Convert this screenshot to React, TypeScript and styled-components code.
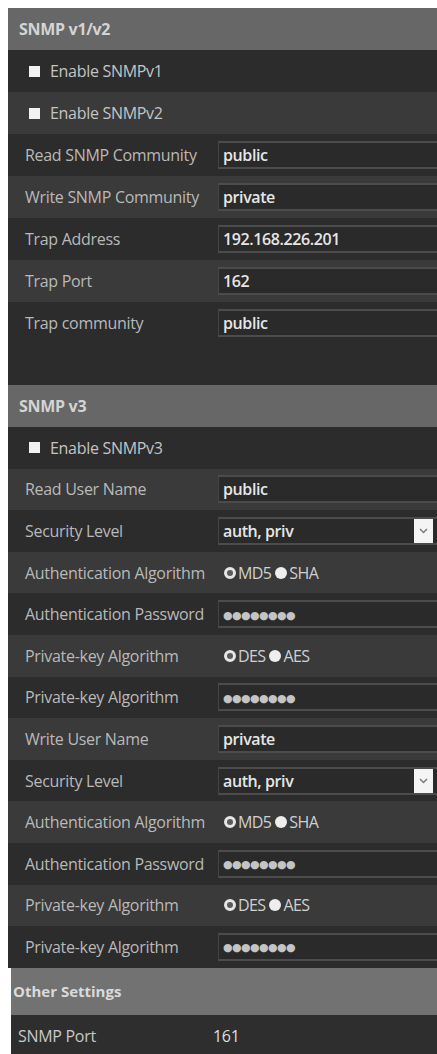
import React from 'react'
import styled, { createGlobalStyle } from 'styled-components'

const GlobalStyle = createGlobalStyle`
  html, body {
    margin: 0;
    padding: 0;
    background: #ffffff;
    overflow: hidden;
  }
  body {
    font-family: 'Open Sans', 'DejaVu Sans', sans-serif;
  }
`

type Field =
  | { kind: 'check'; label: string }
  | { kind: 'text'; label: string; value: string }
  | { kind: 'password'; label: string }
  | { kind: 'select'; label: string; value: string }
  | { kind: 'radio'; label: string; options: [string, string] }

const v12: Field[] = [
  { kind: 'check', label: 'Enable SNMPv1' },
  { kind: 'check', label: 'Enable SNMPv2' },
  { kind: 'text', label: 'Read SNMP Community', value: 'public' },
  { kind: 'text', label: 'Write SNMP Community', value: 'private' },
  { kind: 'text', label: 'Trap Address', value: '192.168.226.201' },
  { kind: 'text', label: 'Trap Port', value: '162' },
  { kind: 'text', label: 'Trap community', value: 'public' },
]

const v3: Field[] = [
  { kind: 'check', label: 'Enable SNMPv3' },
  { kind: 'text', label: 'Read User Name', value: 'public' },
  { kind: 'select', label: 'Security Level', value: 'auth, priv' },
  { kind: 'radio', label: 'Authentication Algorithm', options: ['MD5', 'SHA'] },
  { kind: 'password', label: 'Authentication Password' },
  { kind: 'radio', label: 'Private-key Algorithm', options: ['DES', 'AES'] },
  { kind: 'password', label: 'Private-key Algorithm' },
  { kind: 'text', label: 'Write User Name', value: 'private' },
  { kind: 'select', label: 'Security Level', value: 'auth, priv' },
  { kind: 'radio', label: 'Authentication Algorithm', options: ['MD5', 'SHA'] },
  { kind: 'password', label: 'Authentication Password' },
  { kind: 'radio', label: 'Private-key Algorithm', options: ['DES', 'AES'] },
  { kind: 'password', label: 'Private-key Algorithm' },
]

const FieldRow: React.FC<{ field: Field; index: number; tight?: boolean }> = ({
  field,
  index,
  tight,
}) => {
  const light = index % 2 === 1
  if (field.kind === 'check') {
    return (
      <Row $light={light} $tight={tight}>
        <CheckLabel>
          <CheckBox />
          {field.label}
        </CheckLabel>
      </Row>
    )
  }
  return (
    <Row $light={light} $tight={tight}>
      <Label>{field.label}</Label>
      {field.kind === 'text' && <Input>{field.value}</Input>}
      {field.kind === 'password' && (
        <Input>
          <Dots>{'●●●●●●●●'}</Dots>
        </Input>
      )}
      {field.kind === 'select' && (
        <Input>
          {field.value}
          <SelectArrow>
            <svg width="11" height="8" viewBox="0 0 11 8">
              <path d="M2 2 L5.5 5.5 L9 2" stroke="#7a7a7a" strokeWidth="1.5" fill="none" />
            </svg>
          </SelectArrow>
        </Input>
      )}
      {field.kind === 'radio' && (
        <Radios>
          <RadioItem>
            <RadioDot $checked />
            {field.options[0]}
          </RadioItem>
          <RadioItem>
            <RadioDot />
            {field.options[1]}
          </RadioItem>
        </Radios>
      )}
    </Row>
  )
}

export default function App() {
  return (
    <>
      <GlobalStyle />
      <Page>
        <Panel>
          <Header>SNMP v1/v2</Header>
          {v12.map((f, i) => (
            <FieldRow key={i} field={f} index={i} />
          ))}
          <Spacer />
          <Header>SNMP v3</Header>
          {v3.map((f, i) => (
            <FieldRow key={i} field={f} index={i} tight />
          ))}
        </Panel>
        <OtherPanel>
          <OtherHeader>Other Settings</OtherHeader>
          <OtherRow>
            <OtherLabel>SNMP Port</OtherLabel>
            <OtherValue>161</OtherValue>
          </OtherRow>
        </OtherPanel>
      </Page>
    </>
  )
}

const Page = styled.div`
  padding-top: 8px;
`

const Panel = styled.div`
  margin-left: 8px;
  background: #2d2d2d;
  display: flex;
  flex-direction: column;
`

const Header = styled.div`
  height: 42px;
  display: flex;
  align-items: center;
  padding-left: 11px;
  background: #676767;
  color: #d4d4d4;
  font-weight: 700;
  font-size: 16px;
  letter-spacing: -0.3px;
`

const Row = styled.div<{ $light?: boolean; $tight?: boolean }>`
  height: ${({ $tight }) => ($tight ? '41.6px' : '42px')};
  display: flex;
  align-items: center;
  background: ${({ $light }) => ($light ? '#3a3a3a' : '#2c2c2c')};
  color: #b9b9b9;
  font-size: 16px;
`

const Spacer = styled.div`
  height: 41px;
  background: #2c2c2c;
`

const Label = styled.div`
  width: 193px;
  padding-left: 17px;
  flex-shrink: 0;
  white-space: nowrap;
  letter-spacing: -0.3px;
`

const CheckLabel = styled.div`
  display: flex;
  align-items: center;
  padding-left: 21px;
  gap: 10px;
  color: #c4c4c4;
  letter-spacing: -0.3px;
`

const CheckBox = styled.span`
  width: 11px;
  height: 11px;
  background: #f2f2f2;
  display: inline-block;
`

const Input = styled.div`
  position: relative;
  flex: 1;
  height: 28px;
  box-sizing: border-box;
  display: flex;
  align-items: center;
  padding-left: 4px;
  background: #2a2a2a;
  border-top: 2px solid #4c4c4c;
  border-bottom: 2px solid #4c4c4c;
  border-left: 1px solid #444;
  color: #e6e6e6;
  font-weight: 600;
  font-size: 16px;
  letter-spacing: -0.4px;
`

const Dots = styled.span`
  color: #c4c4c4;
  font-size: 11px;
  letter-spacing: -0.6px;
`

const SelectArrow = styled.span`
  position: absolute;
  left: 195px;
  top: 0px;
  width: 19px;
  height: 24px;
  background: #f4f4f4;
  display: flex;
  align-items: center;
  justify-content: center;
`

const Radios = styled.div`
  display: flex;
  align-items: center;
  padding-left: 6px;
  gap: 4px;
  color: #d0d0d0;
  font-size: 16px;
  letter-spacing: -0.6px;
`

const RadioItem = styled.span`
  display: flex;
  align-items: center;
  gap: 2px;
`

const RadioDot = styled.span<{ $checked?: boolean }>`
  width: 12px;
  height: 12px;
  border-radius: 50%;
  box-sizing: border-box;
  background: ${({ $checked }) => ($checked ? '#5a5a5a' : '#eeeeee')};
  border: ${({ $checked }) => ($checked ? '3px solid #e6e6e6' : 'none')};
`

const OtherPanel = styled.div`
  margin-left: 11px;
  display: flex;
  flex-direction: column;
`

const OtherHeader = styled.div`
  height: 47px;
  display: flex;
  align-items: center;
  padding-left: 2px;
  background: #727272;
  color: #dadada;
  font-weight: 700;
  font-size: 15px;
`

const OtherRow = styled.div`
  height: 42px;
  display: flex;
  align-items: center;
  background: #2e2e2e;
  color: #c8c8c8;
  font-size: 16px;
  letter-spacing: -0.3px;
`

const OtherLabel = styled.div`
  width: 195px;
  padding-left: 7px;
`

const OtherValue = styled.div`
  color: #dedede;
`
